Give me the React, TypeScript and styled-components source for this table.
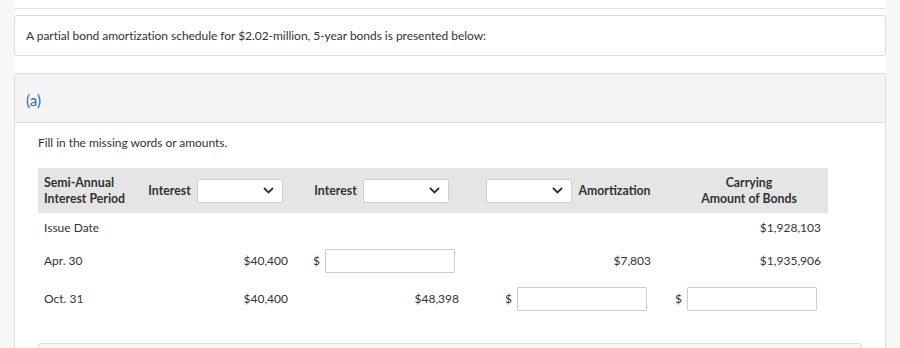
import React from "react";
import styled, { createGlobalStyle } from "styled-components";

const GlobalStyle = createGlobalStyle`
  html, body {
    margin: 0;
    padding: 0;
    background: #f7f7f7;
    font-family: Lato, "Open Sans", Arial, sans-serif;
    color: #333;
  }
  * { box-sizing: border-box; }
`;

const Page = styled.div`
  width: 872px;
  margin-left: 14px;
  height: 348px;
  background: #fff;
  overflow: hidden;
`;

const TopRule = styled.div`
  height: 9px;
  border-bottom: 1px solid #e6e6e6;
  margin-bottom: 6px;
`;

const IntroCard = styled.div`
  border: 1px solid #dcdcdc;
  border-radius: 3px;
  height: 41px;
  padding: 0 11px;
  display: flex;
  align-items: center;
  font-size: 12px;
  letter-spacing: -0.04px;
  margin-bottom: 17px;
`;

const PartCard = styled.div`
  border: 1px solid #dcdcdc;
  border-radius: 3px 3px 0 0;
  border-bottom: none;
`;

const PartHeader = styled.div`
  height: 49px;
  background: #f4f4f4;
  border-bottom: 1px solid #dcdcdc;
  padding: 17px 11px 0;
  font-size: 15px;
  color: #2a6db0;
`;

const PartBody = styled.div`
  padding: 12px 23px 0;
`;

const Instruction = styled.p`
  margin: 0 0 18px;
  font-size: 12px;
  letter-spacing: -0.04px;
`;

const Schedule = styled.table`
  border-collapse: collapse;
  table-layout: fixed;
  width: 790px;
  font-size: 12px;
`;

const HeadRow = styled.tr`
  background: #e5e5e5;
  height: 45px;
`;

const Th = styled.th<{ $align?: string; $pl?: number; $pr?: number }>`
  font-weight: 700;
  font-size: 12.3px;
  white-space: nowrap;
  text-align: ${(p) => p.$align || "left"};
  padding: 0 ${(p) => p.$pr ?? 6}px 0 ${(p) => p.$pl ?? 6}px;
  line-height: 16px;
  vertical-align: middle;
`;

const HeadGroup = styled.div`
  display: flex;
  align-items: center;
  justify-content: center;
  gap: 6px;
`;

const BodyRow = styled.tr<{ $tall?: boolean }>`
  height: ${(p) => (p.$tall ? "38px" : "29px")};
`;

const Td = styled.td<{ $align?: string; $pr?: number }>`
  text-align: ${(p) => p.$align || "left"};
  padding: 0 ${(p) => p.$pr ?? 8}px 1px 6px;
  vertical-align: middle;
`;

const Select = styled.div`
  width: 86px;
  height: 24px;
  background: #fff;
  border: 1px solid #cfcfcf;
  border-radius: 2px;
  display: flex;
  align-items: center;
  justify-content: flex-end;
  padding-right: 8px;
`;

const InputGroup = styled.div`
  display: inline-flex;
  align-items: center;
  gap: 5px;
  margin-right: 4px;
  font-size: 12px;
`;

const Box = styled.div`
  width: 130px;
  height: 24px;
  border: 1px solid #cccccc;
  border-radius: 1px;
  background: #fff;
`;

const NextPanel = styled.div`
  margin-top: 25px;
  width: 824px;
  height: 20px;
  border: 1px solid #dcdcdc;
  border-radius: 3px;
  background: #f7f7f7;
`;

const Chevron = () => (
  <svg width="11" height="7" viewBox="0 0 11 7" fill="none">
    <path d="M1 1l4.5 4.5L10 1" stroke="#333" strokeWidth="1.8" />
  </svg>
);

const Dropdown = () => (
  <Select>
    <Chevron />
  </Select>
);

const Entry = () => (
  <InputGroup>
    <span>$</span>
    <Box />
  </InputGroup>
);

export default function App() {
  return (
    <>
      <GlobalStyle />
      <Page>
        <TopRule />
        <IntroCard>
          A partial bond amortization schedule for $2.02-million, 5-year bonds is presented below:
        </IntroCard>
        <PartCard>
          <PartHeader>(a)</PartHeader>
          <PartBody>
            <Instruction>Fill in the missing words or amounts.</Instruction>
            <Schedule>
              <colgroup>
                <col style={{ width: 97 }} />
                <col style={{ width: 161 }} />
                <col style={{ width: 182 }} />
                <col style={{ width: 181 }} />
                <col style={{ width: 169 }} />
              </colgroup>
              <thead>
                <HeadRow>
                  <Th $pr={0}>
                    Semi-Annual
                    <br />
                    Interest Period
                  </Th>
                  <Th>
                    <HeadGroup>
                      <span>Interest</span>
                      <Dropdown />
                    </HeadGroup>
                  </Th>
                  <Th $pr={17}>
                    <HeadGroup>
                      <span>Interest</span>
                      <Dropdown />
                    </HeadGroup>
                  </Th>
                  <Th>
                    <HeadGroup>
                      <Dropdown />
                      <span>Amortization</span>
                    </HeadGroup>
                  </Th>
                  <Th $align="center" $pl={17}>
                    Carrying
                    <br />
                    Amount of Bonds
                  </Th>
                </HeadRow>
              </thead>
              <tbody>
                <BodyRow>
                  <Td>Issue Date</Td>
                  <Td />
                  <Td />
                  <Td />
                  <Td $align="right" $pr={7}>$1,928,103</Td>
                </BodyRow>
                <BodyRow $tall>
                  <Td>Apr. 30</Td>
                  <Td $align="right">$40,400</Td>
                  <Td $align="right" $pr={19}>
                    <Entry />
                  </Td>
                  <Td $align="right">$7,803</Td>
                  <Td $align="right" $pr={7}>$1,935,906</Td>
                </BodyRow>
                <BodyRow $tall>
                  <Td>Oct. 31</Td>
                  <Td $align="right">$40,400</Td>
                  <Td $align="right" $pr={19}>$48,398</Td>
                  <Td $align="right">
                    <Entry />
                  </Td>
                  <Td $align="right" $pr={7}>
                    <Entry />
                  </Td>
                </BodyRow>
              </tbody>
            </Schedule>
            <NextPanel />
          </PartBody>
        </PartCard>
      </Page>
    </>
  );
}
